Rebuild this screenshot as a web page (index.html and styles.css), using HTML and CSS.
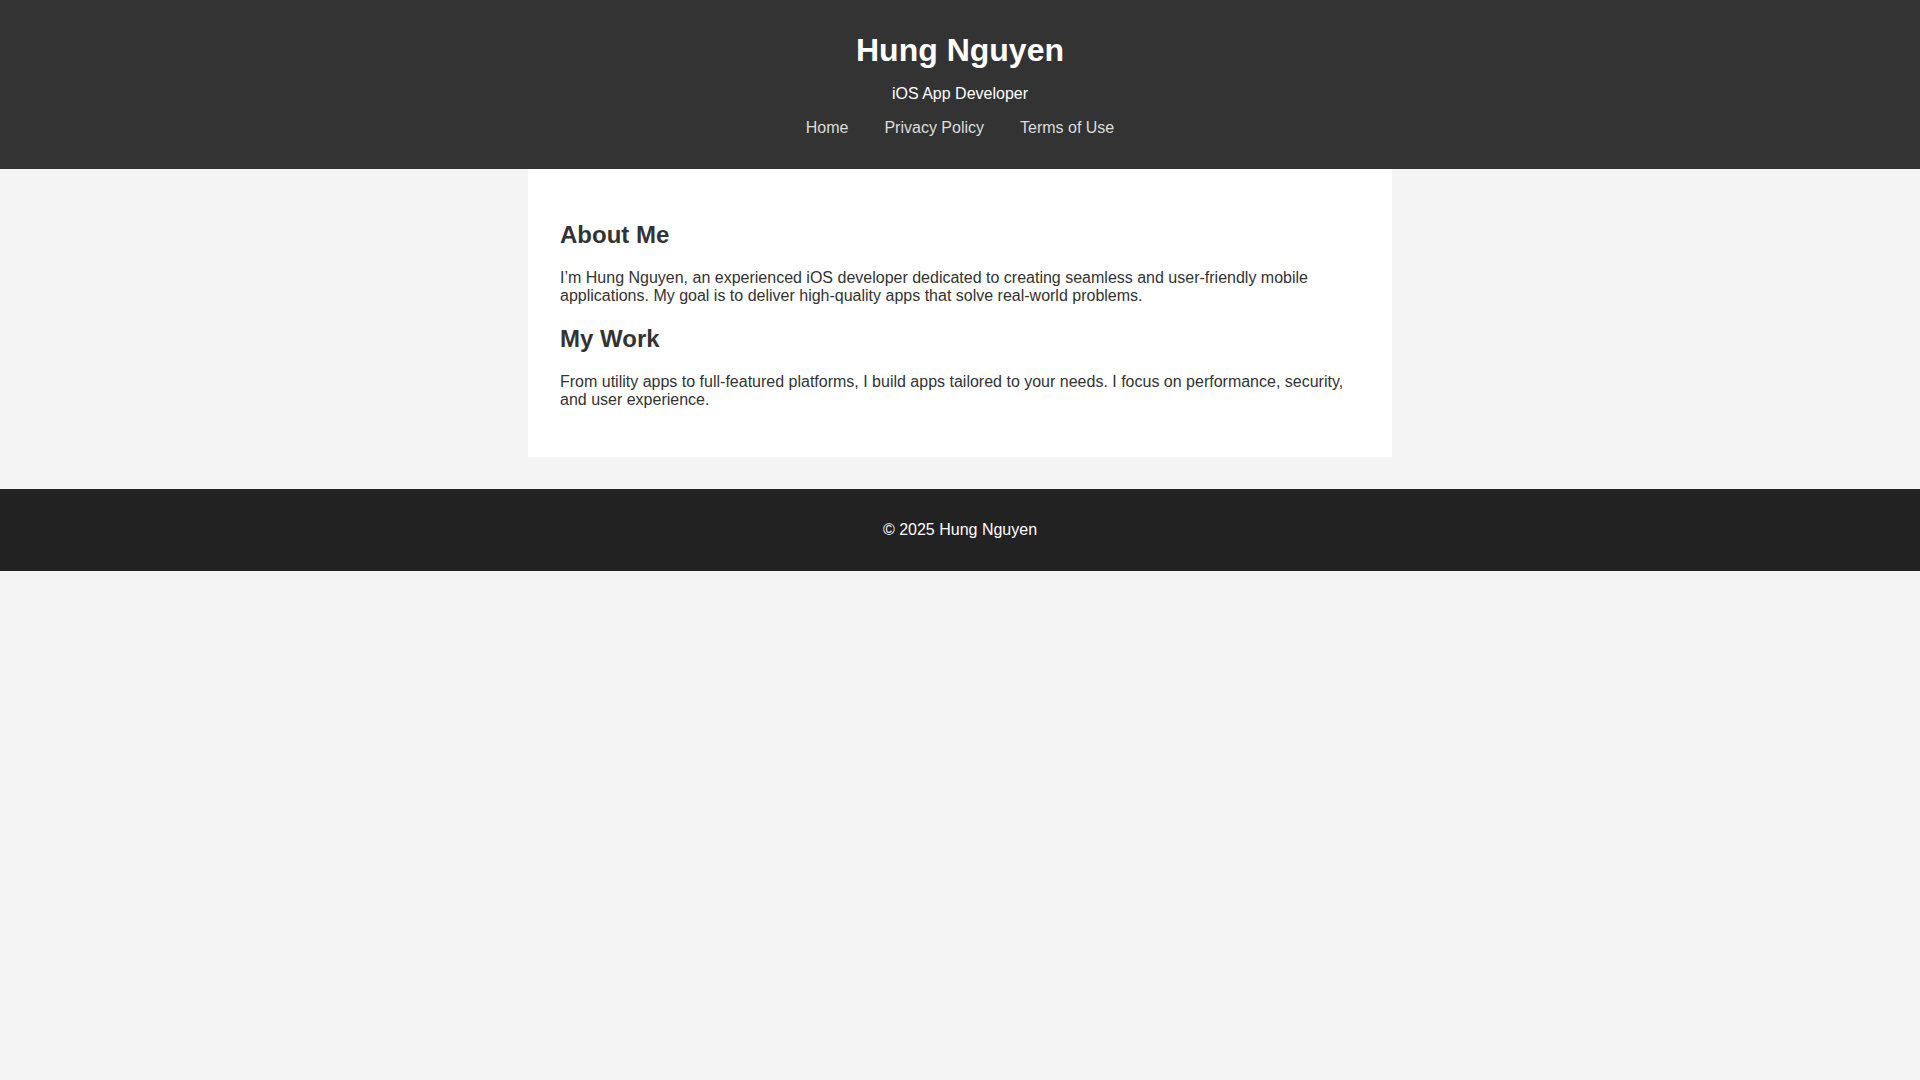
FILE: index.html
```html
<!DOCTYPE html>
<html lang="en">
<head>
<meta charset="utf-8">
<title>Hung Nguyen - iOS App Developer</title>
<link rel="stylesheet" href="styles.css">
</head>
<body>
<header class="site-header">
  <h1 class="site-title">Hung Nguyen</h1>
  <p class="site-tagline">iOS App Developer</p>
  <nav class="site-nav">
    <a href="#" class="nav-link">Home</a>
    <a href="#" class="nav-link">Privacy Policy</a>
    <a href="#" class="nav-link">Terms of Use</a>
  </nav>
</header>
<main class="content">
  <section>
    <h2 class="section-title">About Me</h2>
    <p class="section-text">I’m Hung Nguyen, an experienced iOS developer dedicated to creating seamless and user-friendly mobile applications. My goal is to deliver high-quality apps that solve real-world problems.</p>
  </section>
  <section>
    <h2 class="section-title">My Work</h2>
    <p class="section-text">From utility apps to full-featured platforms, I build apps tailored to your needs. I focus on performance, security, and user experience.</p>
  </section>
</main>
<footer class="site-footer">
  <p class="footer-text">© 2025 Hung Nguyen</p>
</footer>
</body>
</html>
```

FILE: styles.css
```css
html, body {
  margin: 0;
  padding: 0;
}

body {
  background: #f4f4f4;
  color: #333;
  font-family: "Liberation Sans", Arial, sans-serif;
  font-size: 16px;
  line-height: normal;
}

.site-header {
  background: #333;
  color: #fff;
  text-align: center;
  padding: 16px 0 32px;
}

.site-title {
  font-size: 32px;
  font-weight: bold;
  margin: 16px 0 0;
}

.site-tagline {
  margin: 16px 0 0;
}

.site-nav {
  display: flex;
  justify-content: center;
  gap: 36px;
  margin-top: 16px;
}

.nav-link {
  color: #ddd;
  text-decoration: none;
}

.content {
  box-sizing: border-box;
  max-width: 864px;
  margin: 0 auto;
  background: #fff;
  padding: 32px;
}

.section-title {
  font-size: 24px;
  font-weight: bold;
  margin: 0.83em 0;
}

.section-text {
  margin: 16px 0;
}

.site-footer {
  background: #222;
  color: #fff;
  text-align: center;
  padding: 16px 0;
  margin-top: 32px;
}

.footer-text {
  margin: 16px 0;
}
```
